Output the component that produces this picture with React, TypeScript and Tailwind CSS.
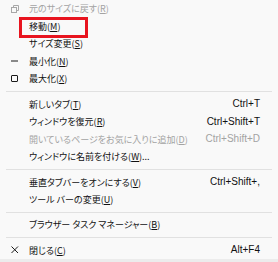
import React from 'react';

type Item =
  | { kind: 'sep' }
  | {
      kind: 'item';
      label: string;
      key: string;
      tail?: string;
      shortcut?: string;
      icon?: 'restore' | 'min' | 'max' | 'close';
      disabled?: boolean;
      boxed?: boolean;
    };

const items: Item[] = [
  { kind: 'item', label: '元のサイズに戻す', key: 'R', icon: 'restore', disabled: true },
  { kind: 'item', label: '移動', key: 'M', boxed: true },
  { kind: 'item', label: 'サイズ変更', key: 'S' },
  { kind: 'item', label: '最小化', key: 'N', icon: 'min' },
  { kind: 'item', label: '最大化', key: 'X', icon: 'max' },
  { kind: 'sep' },
  { kind: 'item', label: '新しいタブ', key: 'T', shortcut: 'Ctrl+T' },
  { kind: 'item', label: 'ウィンドウを復元', key: 'R', shortcut: 'Ctrl+Shift+T' },
  { kind: 'item', label: '開いているページをお気に入りに追加', key: 'D', shortcut: 'Ctrl+Shift+D', disabled: true },
  { kind: 'item', label: 'ウィンドウに名前を付ける', key: 'W', tail: '...' },
  { kind: 'sep' },
  { kind: 'item', label: '垂直タブバーをオンにする', key: 'V', shortcut: 'Ctrl+Shift+,' },
  { kind: 'item', label: 'ツール バーの変更', key: 'U' },
  { kind: 'sep' },
  { kind: 'item', label: 'ブラウザー タスク マネージャー', key: 'B' },
  { kind: 'sep' },
  { kind: 'item', label: '閉じる', key: 'C', icon: 'close', shortcut: 'Alt+F4' },
];

const Icon = ({ name }: { name: string }) => {
  if (name === 'restore')
    return (
      <svg width="8" height="8" viewBox="0 0 8 8" fill="none" stroke="#a8a8a8" strokeWidth="1">
        <rect x="0.5" y="2.5" width="5" height="5" />
        <path d="M2.5 2.5V0.5H7.5V5.5H5.5" />
      </svg>
    );
  if (name === 'min')
    return (
      <svg width="8" height="8" viewBox="0 0 8 8">
        <rect x="0" y="3.5" width="7" height="1" fill="#1a1a1a" />
      </svg>
    );
  if (name === 'max')
    return (
      <svg width="8" height="8" viewBox="0 0 8 8" fill="none" stroke="#1a1a1a" strokeWidth="1">
        <rect x="0.5" y="0.5" width="6" height="6" rx="0.5" />
      </svg>
    );
  return (
    <svg width="8" height="8" viewBox="0 0 8 8" fill="none" stroke="#1a1a1a" strokeWidth="1">
      <path d="M0.5 0.5L7 7M7 0.5L0.5 7" />
    </svg>
  );
};

export default function App() {
  return (
    <div className="w-[278px] h-[262px] bg-[#ececec] overflow-hidden">
      <div className="h-[259px] bg-[#f9f9f9] flex flex-col text-[9px] leading-none text-[#111] font-['Noto_Sans_CJK_JP',sans-serif] [font-feature-settings:'palt']">
        {items.map((it, i) =>
          it.kind === 'sep' ? (
            <div key={i} className="h-[8px] flex items-center px-[6px]">
              <div className="h-px w-full bg-[#e1e1e1]" />
            </div>
          ) : (
            <div
              key={i}
              className={`h-[17.5px] shrink-0 flex items-center pr-[18px] ${it.disabled ? 'text-[#a3a3a3]' : ''}`}
            >
              <div className="w-[29px] flex justify-center pl-[1px]">{it.icon && <Icon name={it.icon} />}</div>
              <div className="relative whitespace-nowrap">
                {it.boxed && (
                  <div className="absolute left-[-10px] top-[-5px] w-[69px] h-[21px] border-[3px] border-[#e8141f]" />
                )}
                {it.label}(<span className="underline underline-offset-1">{it.key}</span>){it.tail}
              </div>
              {it.shortcut && (
                <div className="ml-auto whitespace-nowrap text-[10px] font-['Liberation_Sans',sans-serif]">
                  {it.shortcut}
                </div>
              )}
            </div>
          )
        )}
      </div>
    </div>
  );
}
